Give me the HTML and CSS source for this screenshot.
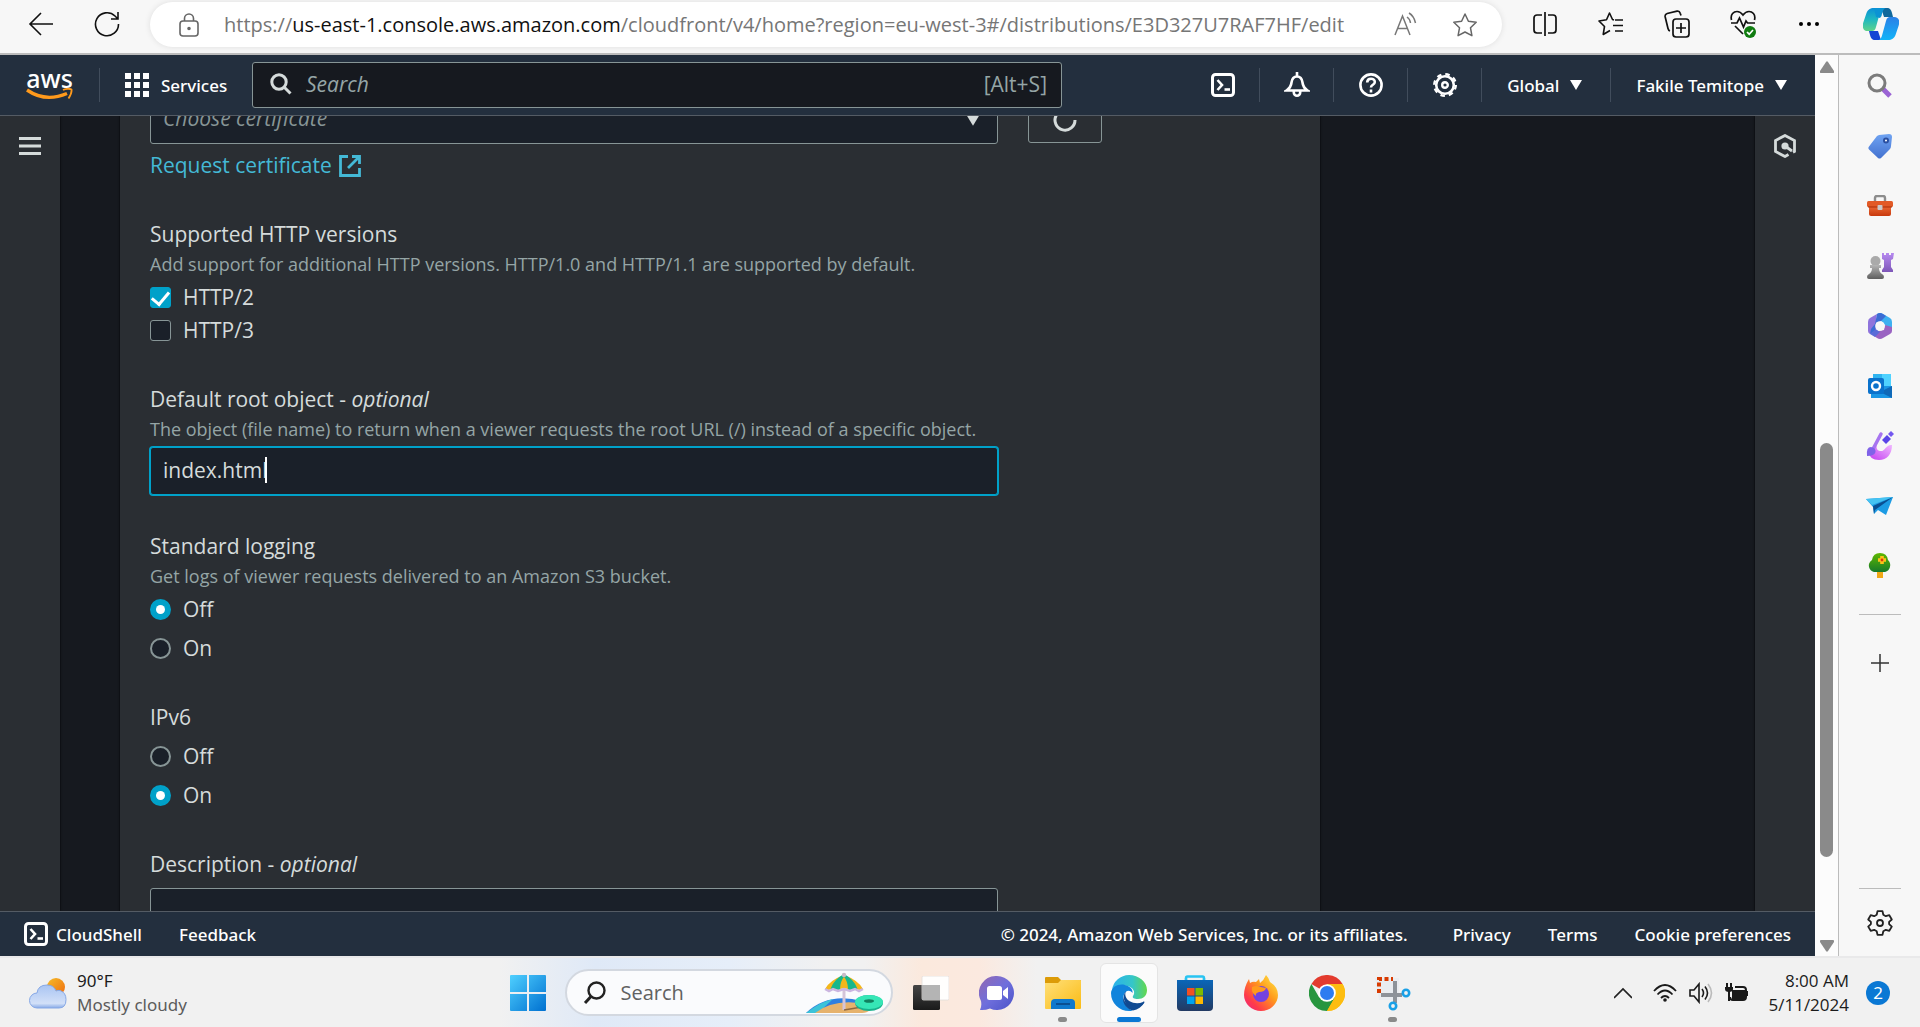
FILE: index.html
```html
<!DOCTYPE html>
<html lang="en">
<head>
<meta charset="utf-8">
<title>CloudFront distribution settings</title>
<link rel="stylesheet" href="styles.css">
</head>
<body>
<svg class="defs" width="0" height="0" aria-hidden="true">
  <defs>
    <linearGradient id="gWin" x1="0" y1="0" x2="1" y2="1"><stop offset="0" stop-color="#4fd0ff"/><stop offset="1" stop-color="#0070d0"/></linearGradient>
    <linearGradient id="gCopA" x1="0" y1="0" x2="0" y2="1"><stop offset="0" stop-color="#0b8fd8"/><stop offset=".5" stop-color="#1fb8c0"/><stop offset="1" stop-color="#5fd38a"/></linearGradient>
    <linearGradient id="gCopB" x1="0" y1="1" x2="0" y2="0"><stop offset="0" stop-color="#2a7fe6"/><stop offset="1" stop-color="#12b4f8"/></linearGradient>
    <linearGradient id="gTag" x1="0" y1="0" x2="0" y2="1"><stop offset="0" stop-color="#6fa3f2"/><stop offset="1" stop-color="#4472d0"/></linearGradient>
    <linearGradient id="gBox" x1="0" y1="0" x2="0" y2="1"><stop offset="0" stop-color="#ec6b35"/><stop offset="1" stop-color="#c8390e"/></linearGradient>
    <linearGradient id="gGrey" x1="0" y1="0" x2="0" y2="1"><stop offset="0" stop-color="#b5b5b5"/><stop offset="1" stop-color="#5f5f5f"/></linearGradient>
    <linearGradient id="gPurple" x1="0" y1="0" x2="0" y2="1"><stop offset="0" stop-color="#b78af0"/><stop offset="1" stop-color="#7e57b8"/></linearGradient>
    <linearGradient id="gPink" x1="0" y1="1" x2="1" y2="0"><stop offset="0" stop-color="#c23cf0"/><stop offset="1" stop-color="#f0b8ff"/></linearGradient>
    <linearGradient id="gTree" x1="0" y1="0" x2="0" y2="1"><stop offset="0" stop-color="#5fb800"/><stop offset="1" stop-color="#167a2a"/></linearGradient>
    <linearGradient id="gSun" x1="0" y1="0" x2="1" y2="1"><stop offset="0" stop-color="#f6bd28"/><stop offset="1" stop-color="#ee6a10"/></linearGradient>
    <linearGradient id="gCloud" x1="0" y1="0" x2="0" y2="1"><stop offset="0" stop-color="#a9c4f2"/><stop offset=".8" stop-color="#d2e0f8"/><stop offset="1" stop-color="#88aae6"/></linearGradient>
    <linearGradient id="gChat" x1="0" y1="0" x2="1" y2="1"><stop offset="0" stop-color="#9468b0"/><stop offset=".5" stop-color="#6f6fdc"/><stop offset="1" stop-color="#4a52c8"/></linearGradient>
    <linearGradient id="gFold" x1="0" y1="0" x2="1" y2="1"><stop offset="0" stop-color="#ffe07a"/><stop offset="1" stop-color="#fabb14"/></linearGradient>
    <linearGradient id="gEdgeTop" x1="0" y1="0" x2="1" y2="0"><stop offset="0" stop-color="#2ab0ee"/><stop offset=".6" stop-color="#35c6c8"/><stop offset="1" stop-color="#62d84c"/></linearGradient>
    <linearGradient id="gStore" x1="0" y1="0" x2="0" y2="1"><stop offset="0" stop-color="#0a66b8"/><stop offset="1" stop-color="#233a62"/></linearGradient>
    <linearGradient id="gFox" x1="1" y1="0" x2="0" y2="1"><stop offset="0" stop-color="#fff14a"/><stop offset=".4" stop-color="#ff9a1c"/><stop offset=".75" stop-color="#ff3b4a"/><stop offset="1" stop-color="#e8208a"/></linearGradient>
    <linearGradient id="gTask" x1="0" y1="0" x2="0" y2="1"><stop offset="0" stop-color="#454545"/><stop offset="1" stop-color="#1a1a1a"/></linearGradient>
    <symbol id="shell" viewBox="0 0 24 24"><rect x="1.500" y="1.500" width="21" height="21" rx="3" fill="none" stroke="#fff" stroke-width="3"/><path d="M6.500 7l4.500 5-4.500 5" fill="none" stroke="#fff" stroke-width="2.600"/><path d="M13.500 16.500h5.500" stroke="#fff" stroke-width="2.600"/></symbol>
    <symbol id="caret" viewBox="0 0 12 10"><path d="M0 0h12L6 10z" fill="currentColor"/></symbol>
  </defs>
</svg>

<header class="toolbar">
  <button class="tool" aria-label="Back"><svg width="26" height="26" viewBox="0 0 26 26" fill="none" stroke="#111" stroke-width="1.600"><path d="M25 13H2M13 2L2 13l11 11"/></svg></button>
  <button class="tool" aria-label="Refresh"><svg width="26" height="26" viewBox="0 0 26 26" fill="none" stroke="#111" stroke-width="1.600"><path d="M24.500 13A11.500 11.500 0 1 1 21 5l3 3M24 1v7h-7"/></svg></button>
  <div class="address">
    <svg width="20" height="24" viewBox="0 0 20 24" fill="none" stroke="#666" stroke-width="1.600"><rect x="1" y="8" width="18" height="15" rx="3"/><path d="M5.500 8V5.500a4.500 4.500 0 0 1 9 0V8"/><circle cx="10" cy="15.500" r="1" fill="#666"/></svg>
    <div class="url" role="textbox" contenteditable="true" spellcheck="false" aria-label="Address">https://<b>us-east-1.console.aws.amazon.com</b>/cloudfront/v4/home?region=eu-west-3#/distributions/E3D327U7RAF7HF/edit</div>
    <button class="tool narrow" aria-label="Read aloud"><svg width="26" height="26" viewBox="0 0 26 26" fill="none" stroke="#777" stroke-width="1.500"><path d="M2 23L9.500 4l7.500 19M4.500 16.500h10M14 5q3 2 3.500 6M16 1q5 3 6.500 10"/></svg></button>
    <button class="tool narrow" aria-label="Add to favorites"><svg width="26" height="26" viewBox="0 0 26 26" fill="none" stroke="#666" stroke-width="1.500" stroke-linejoin="round"><path d="M13 2l3.400 7.200 7.800 1.100-5.700 5.500 1.400 7.900L13 20l-6.900 3.700 1.400-7.900-5.700-5.500 7.800-1.100z"/></svg></button>
  </div>
  <div class="browser-tools">
    <button class="tool" aria-label="Split screen"><svg width="24" height="26" viewBox="0 0 24 26" fill="none" stroke="#111" stroke-width="1.700"><path d="M9 4H4a3 3 0 0 0-3 3v12a3 3 0 0 0 3 3h5M15 4h5a3 3 0 0 1 3 3v12a3 3 0 0 1-3 3h-5M12 1v24"/></svg></button>
    <button class="tool" aria-label="Favorites"><svg width="26" height="26" viewBox="0 0 26 26" fill="none" stroke="#111" stroke-width="1.600" stroke-linejoin="round"><path d="M16 9l-1.500-.5L11.500 2 8.500 8.800 1 10l5.500 5.500L5.200 23.500l6.800-4M17 9h8M15 14.500h10M17 20h8"/></svg></button>
    <button class="tool" aria-label="Collections"><svg width="26" height="28" viewBox="0 0 26 28" fill="none" stroke="#111" stroke-width="1.700"><rect x="9" y="9" width="16" height="18" rx="3"/><path d="M17 13v10M12 18h10M6 21q-1.500-.5-2-2.500L1.200 7q-.6-2.800 2-3.500L13 1.200q2.500-.4 3.200 2l.8 2.300"/></svg></button>
    <button class="tool" aria-label="Browser essentials"><svg width="26" height="28" viewBox="0 0 26 28" fill="none" stroke="#111" stroke-width="1.700"><path d="M1.500 10C0 4 4 1.500 7 1.500c3 0 4.500 1.500 6 3.500 1.500-2 3-3.500 6-3.500s7 2.500 5.500 8.500M1 13h6l2.500-5 4 9 2.500-6 1.500 2H25M5 16l8 8"/><circle cx="20" cy="22" r="6" fill="#107c10" stroke="none"/><path d="M17 22l2.200 2.200L23 20" stroke="#fff"/></svg></button>
    <button class="tool" aria-label="Settings and more"><svg width="22" height="6" viewBox="0 0 22 6"><circle cx="3" cy="3" r="2"/><circle cx="11" cy="3" r="2"/><circle cx="19" cy="3" r="2"/></svg></button>
  </div>
  <button class="copilot" aria-label="Copilot"><svg width="36" height="32" viewBox="0 0 36 32"><path d="M18 0h6c3 0 4 1.500 5 5l1 4h-9z" fill="#10689c"/><path d="M18 32h-6c-3 0-4-1.500-5-5l-1-4h9z" fill="#1546d4"/><path id="ribbon" d="M11 0h9c-2 1-2.600 3-3.300 5.500L13 19c-.8 3-2 4-4 4H5c-5 0-6-4-4.700-8.500L3.500 5C5 1.500 7 0 11 0z" fill="url(#gCopA)"/><path d="M11 0h12c-2.500 0-3.500 4-4.500 8l-1.500 2L13 9z" fill="#0b93d4"/><path d="M11 0h9c-2 1-2.600 3-3.300 5.500L13 19c-.8 3-2 4-4 4H5c-5 0-6-4-4.700-8.500L3.500 5C5 1.500 7 0 11 0z" fill="url(#gCopB)" transform="rotate(180 18 16)"/></svg></button>
</header>

<div class="browser">
  <div class="page">
    <header class="aws-header">
      <a class="logo" href="#" aria-label="AWS home"><span>aws</span><svg width="48" height="14" viewBox="0 0 48 14"><path d="M1 2c13 9 27 9 40 3.500" fill="none" stroke="#ff9a1c" stroke-width="3.400"/><path d="M37 2c3-1.500 7-1.500 8.500-.5.500 3-1 6-3 9" fill="none" stroke="#ff9a1c" stroke-width="1.800"/></svg></a>
      <button class="services"><svg width="24" height="24" viewBox="0 0 24 24" fill="#fff"><path d="M0 0h6v6H0zM9 0h6v6H9zM18 0h6v6h-6zM0 9h6v6H0zM9 9h6v6H9zM18 9h6v6h-6zM0 18h6v6H0zM9 18h6v6H9zM18 18h6v6h-6z"/></svg>Services</button>
      <label class="search">
        <svg width="22" height="22" viewBox="0 0 22 22" fill="none" stroke="#d5dbdb" stroke-width="3"><circle cx="9" cy="9" r="7.200"/><path d="M14 14l6.500 6.500"/></svg>
        <input type="search" placeholder="Search" aria-label="Search services">
        <span>[Alt+S]</span>
      </label>
      <nav class="aws-nav">
        <button aria-label="CloudShell"><svg width="24" height="24"><use href="#shell"/></svg></button>
        <button aria-label="Notifications"><svg width="26" height="26" viewBox="0 0 26 26" fill="none" stroke="#fff" stroke-width="2.600"><path d="M13 0v4M2.500 18.500q4.500-3 5-8 .8-6 5.500-6t5.500 6q.5 5 5 8z"/><path d="M9.800 19v1.500a3.200 3.200 0 0 0 6.400 0V19"/></svg></button>
        <button aria-label="Help"><svg width="24" height="24" viewBox="0 0 24 24" fill="none" stroke="#fff" stroke-width="2.600"><circle cx="12" cy="12" r="10.600"/><path d="M8.200 9.500c0-5 7.600-4.800 7.600-.6 0 3-3.800 2.800-3.800 5.600"/><path d="M12 16.500v3"/></svg></button>
        <button aria-label="Settings"><svg width="24" height="24" viewBox="0 0 24 24" fill="none" stroke="#fff"><circle cx="12" cy="12" r="8.800" stroke-width="2.600"/><circle cx="12" cy="12" r="10.800" stroke-width="2.400" stroke-dasharray="4.500 3.980"/><circle cx="12" cy="12" r="2.800" stroke-width="2.400"/></svg></button>
        <button class="menu">Global<svg width="12" height="10"><use href="#caret"/></svg></button>
        <button class="menu">Fakile Temitope<svg width="12" height="10"><use href="#caret"/></svg></button>
      </nav>
    </header>

    <main class="workspace">
      <aside class="strip"><button aria-label="Open navigation"><svg width="22" height="18" viewBox="0 0 22 18" fill="#d5dbdb"><path d="M0 0h22v3H0zM0 7.500h22v3H0zM0 15h22v3H0z"/></svg></button></aside>
      <form class="panel">
        <div class="group">
          <div class="cert-row">
            <div class="select-wrap"><select aria-label="Custom SSL certificate"><option>Choose certificate</option></select><svg width="14" height="12"><use href="#caret"/></svg></div>
            <button type="button" class="reload" aria-label="Refresh certificates"><svg width="24" height="24" viewBox="0 0 24 24" fill="none" stroke="#d5dbdb" stroke-width="3"><path d="M22 12a10 10 0 1 1-3.500-7.500M21 0v6h-6"/></svg></button>
          </div>
          <a class="link" href="#">Request certificate<svg width="22" height="22" viewBox="0 0 22 22" fill="none" stroke="#44b9d6" stroke-width="2.800"><path d="M9 1.500H1.500v19h19V13M13 1.500h7.500V9M20 2L9 13"/></svg></a>
        </div>
        <fieldset class="group">
          <legend>Supported HTTP versions</legend>
          <p class="hint">Add support for additional HTTP versions. HTTP/1.0 and HTTP/1.1 are supported by default.</p>
          <div class="checks">
            <label class="choice"><input type="checkbox" checked>HTTP/2</label>
            <label class="choice"><input type="checkbox">HTTP/3</label>
          </div>
        </fieldset>
        <div class="group">
          <label class="title" for="root">Default root object - <i>optional</i></label>
          <p class="hint">The object (file name) to return when a viewer requests the root URL (/) instead of a specific object.</p>
          <div class="box focused"><input id="root" class="fit" type="text" value="index.html" spellcheck="false"><span class="cursor"></span></div>
        </div>
        <fieldset class="group">
          <legend>Standard logging</legend>
          <p class="hint">Get logs of viewer requests delivered to an Amazon S3 bucket.</p>
          <div class="radios">
            <label class="choice"><input type="radio" name="logging" checked>Off</label>
            <label class="choice"><input type="radio" name="logging">On</label>
          </div>
        </fieldset>
        <fieldset class="group">
          <legend>IPv6</legend>
          <div class="radios">
            <label class="choice"><input type="radio" name="ipv6">Off</label>
            <label class="choice"><input type="radio" name="ipv6" checked>On</label>
          </div>
        </fieldset>
        <div class="group">
          <label class="title" for="desc">Description - <i>optional</i></label>
          <div class="box"><input id="desc" type="text"></div>
        </div>
      </form>
      <aside class="strip right"><button aria-label="Open assistant"><svg width="24" height="24" viewBox="0 0 24 24" fill="none" stroke="#d5dbdb" stroke-width="2.800"><path d="M15.500 20.500l-3.500 2L2.500 17.500v-11L12 1.500l9.500 5v11l-1.500.8"/><circle cx="12" cy="12" r="3.600" fill="#d5dbdb" stroke="none"/><path d="M12 12l7 5"/></svg></button></aside>
    </main>

    <footer class="aws-footer">
      <button><svg width="24" height="24"><use href="#shell"/></svg>CloudShell</button>
      <button class="feedback">Feedback</button>
      <span class="copyright">© 2024, Amazon Web Services, Inc. or its affiliates.</span>
      <a href="#">Privacy</a>
      <a href="#">Terms</a>
      <a href="#">Cookie preferences</a>
    </footer>
  </div>

  <div class="scrollbar">
    <svg width="14" height="12" viewBox="0 0 14 12"><path d="M6 1q1-1.500 2 0l6 9q.5 2-1 2H1q-1.500 0-1-2z" fill="#8a8a8a"/></svg>
    <div class="track"><div class="thumb"></div></div>
    <svg width="14" height="12" viewBox="0 0 14 12"><path d="M6 11q1 1.500 2 0l6-9q.5-2-1-2H1Q-.5 0 0 2z" fill="#8a8a8a"/></svg>
  </div>

  <aside class="sidebar">
    <button aria-label="Search"><svg width="26" height="26" viewBox="0 0 26 26" fill="none"><path d="M16 16l7 7" stroke="#9a63d4" stroke-width="5"/><circle cx="10" cy="10" r="8" stroke="#7b7b7b" stroke-width="3"/></svg></button>
    <button aria-label="Shopping"><svg width="26" height="26" viewBox="0 0 26 26"><path d="M12 2l10-1q3 0 3 3l-1 9q0 2-1.500 3.500L14 25q-1.500 1-3 0L2 16.500q-1.500-1.500 0-3L10 3z" fill="url(#gTag)"/><circle cx="19" cy="7.500" r="2" fill="#fff" stroke="#2b4fa0" stroke-width="2"/></svg></button>
    <button aria-label="Tools"><svg width="28" height="22" viewBox="0 0 28 22"><path d="M9 6V3q0-2 2-2h6q2 0 2 2v3" fill="none" stroke="#8c8c8c" stroke-width="2.400"/><path d="M3 11h22v8q0 2-2 2H5q-2 0-2-2z" fill="url(#gBox)"/><rect x="1" y="6" width="26" height="6" rx="1.500" fill="#e25a26"/><path d="M2 12h24" stroke="#a82c08" stroke-width="1"/><rect x="11.500" y="10" width="5" height="5" rx="1" fill="#c9c9c9"/></svg></button>
    <button aria-label="Games"><svg width="28" height="28" viewBox="0 0 28 28"><path d="M16 1h2v2h2V1h3v2h2V1h3l-1 6-2 1v7l2 3v2H16v-2l2-3V8l-2-1z" fill="url(#gPurple)"/><circle cx="9.500" cy="9" r="5" fill="#aaa"/><path d="M4 13h11v3h-2q0 4 3 6 2 1 2 3t-2 2H3q-2 0-2-2t2-3q3-2 3-6H4z" fill="url(#gGrey)"/></svg></button>
    <button aria-label="Microsoft 365"><svg width="26" height="28" viewBox="0 0 26 28"><path d="M10 2q3-2 6 0l7 4q2 1 2 4v8l-7-5-4-4-4 2z" fill="#3eb0f0"/><path d="M10 2L3 6Q1 7 1 10v9q0 2 2 3l6-3V8z" fill="#8f74dc"/><path d="M10 2q3-2 6 0l3 2-5 5-5 2-1 8-5 3 1-5 4-5z" fill="#3c6cd4"/><path d="M25 15v4q0 2-2 3l-7 4q-3 2-6 0l-3-2 5-5 5-1 1-5z" fill="#9a63c2"/><path d="M9 17l4 3-5 5-5-3z" fill="#5a6cd8"/><circle cx="13" cy="14" r="4.800" fill="#f7f7f7"/></svg></button>
    <button aria-label="Outlook"><svg width="26" height="26" viewBox="0 0 26 26"><path d="M6 1h18v12H6z" fill="#30b4f0"/><path d="M15 1h9v12h-9z" fill="#4fd2ff"/><path d="M4 13h21v12H4z" fill="#1a96e4"/><path d="M25 13v12l-12-6z" fill="#0f69b8"/><rect x="1" y="5" width="16" height="16" rx="2" fill="#0a72cc"/><circle cx="9" cy="13" r="4" fill="none" stroke="#fff" stroke-width="2.400"/></svg></button>
    <button aria-label="Designer"><svg width="28" height="30" viewBox="0 0 28 30"><path d="M3 21c0 5 4 8 10 8 8 0 13-6 13-15-6-1-7 7-12 6-3-.5-4-3-3-6z" fill="url(#gPink)"/><path d="M15 3L7 18" stroke="#a774f0" stroke-width="3.500" stroke-linecap="round"/><path d="M1 25q-1-9 4-9 5 1 4.500 5-1 4-8.500 4z" fill="#7f62e8"/><path d="M21 4l4 4-5 5-4-4z" fill="#5a45e8"/><path d="M25 0l3 3-3 3-3-3z" fill="#7356f0"/></svg></button>
    <button aria-label="Drop"><svg width="27" height="20" viewBox="0 0 27 20"><path d="M0 3L27 1l-7 18-8-5-4 4-1-7z" fill="#1c9be4"/><path d="M7 10L27 1 9 14l-1 4z" fill="#0a4f92"/><path d="M0 3l27-2L6 9z" fill="#45c3f2"/></svg></button>
    <button aria-label="Tree"><svg width="24" height="28" viewBox="0 0 24 28"><path d="M9 19h6v7H9z" fill="#f0a818"/><path d="M12 1q7 0 8 7 3 3 2 7t-5 5H6q-4-1-5-5t3-7Q5 1 12 1z" fill="url(#gTree)"/><path d="M14 4v8M10 8h8" stroke="#ffc21a" stroke-width="3.600"/><circle cx="14" cy="8" r="1.400" fill="#d63a10"/></svg></button>
    <hr>
    <button class="add" aria-label="Customize"><svg width="18" height="18" viewBox="0 0 18 18" stroke="#333" stroke-width="1.500"><path d="M9 0v18M0 9h18"/></svg></button>
    <hr class="low">
    <button aria-label="Sidebar settings"><svg width="26" height="26" viewBox="0 0 26 26" fill="none" stroke="#222" stroke-width="1.800" stroke-linejoin="round"><path d="M10.500 1.200h5l.8 3.600 2.500 1.400 3.500-1 2.500 4.300-2.700 2.400v2.200l2.700 2.500-2.500 4.200-3.500-1-2.500 1.400-.8 3.600h-5l-.8-3.600-2.500-1.400-3.500 1-2.500-4.200 2.700-2.500v-2.200L1.200 9.500l2.500-4.300 3.500 1 2.500-1.400z"/><circle cx="13" cy="13" r="3"/></svg></button>
  </aside>
</div>

<footer class="taskbar">
  <button class="weather">
    <svg width="38" height="32" viewBox="0 0 38 32"><circle cx="27" cy="10" r="9" fill="url(#gSun)"/><path d="M8 31a7.500 7.500 0 0 1 0-15q1-8 10-8 7 0 9 6 2-1 4-.5 6 2 6 9 0 8.500-7 8.500z" fill="url(#gCloud)" stroke="#86a8e6" stroke-width="1"/></svg>
    <span>90°F<small>Mostly cloudy</small></span>
  </button>
  <div class="apps">
    <button class="app" aria-label="Start"><svg width="36" height="36" viewBox="0 0 36 36" fill="url(#gWin)"><path d="M0 1q0-1 1-1h16v17H0zM19 0h16q1 0 1 1v16H19zM0 19h17v17H1q-1 0-1-1zM19 19h17v16q0 1-1 1H19z"/></svg></button>
    <label class="task-search">
      <svg width="24" height="24" viewBox="0 0 24 24" fill="none" stroke="#222" stroke-width="2.400"><circle cx="13.500" cy="9.500" r="8"/><path d="M8 15.500L2 22" stroke-width="3"/></svg>
      <input type="search" placeholder="Search" aria-label="Search Windows">
      <svg width="78" height="42" viewBox="0 0 78 42"><path d="M0 41Q22 20 56 29v12z" fill="#2f7fe0"/><path d="M0 41Q16 29 27 27L12 41z" fill="#3cc3d8"/><path d="M9 41Q30 25 64 33v5q-3 3-8 3z" fill="#e6b26c"/><path d="M38 10v28" stroke="#d4c4d8" stroke-width="3"/><path d="M38 38l18-3" stroke="#8d6840" stroke-width="1.500"/><path d="M19 17Q24 8 38 3q14 5 19 14l-4 1-4-2-4 2-7-2-7 2-4-2-4 2z" fill="#f4b71a"/><path d="M26 16q3-8 12-13-5 6-5 14zM50 16q-3-8-12-13 5 6 5 14z" fill="#18b78c" stroke="#18b78c" stroke-width="2"/><path d="M19 17l4 2 4-2 5 2 6-2 6 2 5-2 4 2 4-2" fill="none" stroke="#cbb6e0" stroke-width="2.500"/><circle cx="38" cy="3" r="2.200" fill="#c9bcc8"/><ellipse cx="63" cy="31" rx="14" ry="8" fill="#19b18c"/><ellipse cx="63" cy="30" rx="14" ry="7" fill="#36e6b6"/><ellipse cx="63" cy="29" rx="5" ry="1.800" fill="#11805f"/></svg>
    </label>
    <button class="app first" aria-label="Task view"><svg width="36" height="34" viewBox="0 0 36 34"><rect x="0" y="9" width="27" height="25" rx="1.500" fill="url(#gTask)"/><rect x="9" y="0" width="27" height="24" rx="1.500" fill="#fff" fill-opacity=".92" stroke="#e2dedb" stroke-width=".8"/><path d="M9 9h18v15H9z" fill="#b4b4b4"/></svg></button>
    <button class="app" aria-label="Chat"><svg width="36" height="36" viewBox="0 0 36 36"><path d="M18 1a17 17 0 1 1-7 32.500q-5 2-10 1.500 2-4 1-9A17 17 0 0 1 18 1z" fill="url(#gChat)"/><rect x="8" y="11" width="15" height="14" rx="2.500" fill="#fff"/><path d="M24 16l5-4v12l-5-4z" fill="#fff"/></svg></button>
    <button class="app" aria-label="File Explorer"><svg width="36" height="34" viewBox="0 0 36 34"><path d="M0 2q0-1 1-1h12l3 3h19q1 0 1 1v6H0z" fill="#dc9b08"/><path d="M0 7h13l3-3h19q1 0 1 1v27q0 1-1 1H1q-1 0-1-1z" fill="url(#gFold)"/><path d="M6 33v-6q0-4 4-4h16q4 0 4 4v6z" fill="#0f78cc"/><path d="M11 28h14" stroke="#0a4f92" stroke-width="2"/></svg><i class="dot"></i></button>
    <button class="app active" aria-label="Microsoft Edge"><svg width="36" height="36" viewBox="0 0 36 36"><path d="M1 15A17.500 17.500 0 0 1 18 0c10 0 18 7 18 15 0 6-4 9-9 9-4 0-6-1-5-3 3-4 0-9-6-10C9 9.500 3 12 0 19z" fill="url(#gEdgeTop)"/><path d="M0 18C1 11 8 8.500 14 10c6 1.500 8 5 7.500 8-3-4-8-2-9 3-1 6 3 12 9 14.500Q20 36 18 36A18 18 0 0 1 0 18z" fill="#1184dc"/><path d="M15 16c-5 6-1 14 5 16 5 2 10 0 13-4 1-1 0-2-1-1-7 3-16 0-17.500-6-.5-2 0-4 .5-5z" fill="#104a92"/><path d="M12 22c-1 7 5 13 10 13.500 5-1 9-4 11.500-8-10 6-20 3-21.500-5.500z" fill="#104a92"/></svg><i class="dot wide"></i></button>
    <button class="app" aria-label="Microsoft Store"><svg width="36" height="36" viewBox="0 0 36 36"><path d="M9 8V3q0-1.500 1.500-1.500h15Q27 1.500 27 3v5" fill="none" stroke="#28c4f2" stroke-width="2.400"/><path d="M0 5h36v27q0 4-4 4H4q-4 0-4-4z" fill="url(#gStore)"/><path d="M9 5V3M27 5V3" stroke="#28c4f2" stroke-width="2.400"/><path d="M10 13h7.500v7.500H10z" fill="#f25022"/><path d="M18.500 13H26v7.500h-7.500z" fill="#7fba00"/><path d="M10 21.500h7.500V29H10z" fill="#00a4ef"/><path d="M18.500 21.500H26V29h-7.500z" fill="#ffb900"/></svg></button>
    <button class="app" aria-label="Firefox"><svg width="34" height="36" viewBox="0 0 34 36"><path d="M22 0q3 3 4 7 8 5 8 13A17 16 0 0 1 0 20Q0 12 5 4l1 4q3-2 6-1l3-3 1 4q4-3 6-8z" fill="url(#gFox)"/><circle cx="17" cy="19" r="8" fill="#7542e0"/><path d="M8 12q5-2 9 0l5 1q-1 4-7 4-4 1-3 4-5-3-4-9z" fill="#ff9a1c"/></svg></button>
    <button class="app" aria-label="Chrome"><svg width="36" height="36" viewBox="0 0 36 36"><path d="M18 18L2.400 9A18 18 0 0 1 33.600 9z" fill="#e33b2e"/><path d="M18 18V9h15.600A18 18 0 0 1 18 36z" fill="#fdbd10"/><path d="M10.200 22.500L2.400 9A18 18 0 0 0 18 36l7.800-13.500z" fill="#28963f"/><path d="M18 9h15.600L18 9zM25.800 22.500L18 36A18 18 0 0 0 33.600 9H18z" fill="#fdbd10"/><circle cx="18" cy="18" r="8.800" fill="#fff"/><circle cx="18" cy="18" r="7" fill="#2d7cf0"/></svg></button>
    <button class="app" aria-label="Snipping Tool"><svg width="36" height="36" viewBox="0 0 36 36" fill="none"><path d="M0 3h24v22H4z" fill="#e9ecf0"/><path d="M4 18V4h14" stroke="#d83b01" stroke-width="4" stroke-dasharray="4 2.500"/><path d="M20 6v22M6 20h21" stroke="#8d9299" stroke-width="4"/><circle cx="31" cy="18" r="3.200" stroke="#1aa0e6" stroke-width="2.600"/><circle cx="18" cy="31" r="3.200" stroke="#1aa0e6" stroke-width="2.600"/></svg><i class="dot"></i></button>
  </div>
  <div class="tray">
    <button aria-label="Show hidden icons"><svg width="18" height="12" viewBox="0 0 18 12" fill="none" stroke="#222" stroke-width="1.700"><path d="M0 11l9-9 9 9"/></svg></button>
    <button aria-label="Network"><svg width="24" height="20" viewBox="0 0 24 20" fill="none" stroke="#1a1a1a" stroke-width="1.800"><path d="M1 8q11-12 22 0M4.500 11.500q7.500-8 15 0M8 15q4-4 8 0"/><circle cx="12" cy="17" r="1.800" fill="#1a1a1a" stroke="none"/></svg></button>
    <button aria-label="Volume"><svg width="24" height="22" viewBox="0 0 24 22" fill="none" stroke="#1a1a1a" stroke-width="1.600"><path d="M1 8h4l5-6v18l-5-6H1zM13 7q3 4 0 8M16 4.500q5 6.500 0 13"/><path d="M19 2q7 9 0 18" stroke="#bbb"/></svg></button>
    <button aria-label="Battery"><svg width="24" height="20" viewBox="0 0 24 20" fill="none" stroke="#1a1a1a" stroke-width="2"><path d="M10 4h8q3 0 3 3v7q0 3-3 3H8q-3 0-3-3"/><path d="M8 8h11v7H8z" fill="#1a1a1a"/><path d="M22 8v5M2 0v4M6 0v4M4 8v10"/><path d="M0 4h8v2q0 3-4 3T0 6z" fill="#1a1a1a" stroke="none"/></svg></button>
    <button class="clock"><span>8:00 AM</span><span>5/11/2024</span></button>
    <button class="badge" aria-label="2 notifications">2</button>
  </div>
</footer>
</body>
</html>
```
FILE: styles.css
```css
* { box-sizing: border-box; }

body {
  margin: 0;
  height: 100vh;
  display: flex;
  flex-direction: column;
  overflow: hidden;
  background: #f7f7f7;
  color: #d5dbdb;
  font: 20px/33px "Noto Sans", "Open Sans", sans-serif;
}

button, input, select {
  margin: 0;
  padding: 0;
  border: 0;
  background: none;
  color: inherit;
  font: inherit;
  outline: 0;
}

a { color: inherit; text-decoration: none; }
svg { display: block; flex: none; }
.defs { position: absolute; }

/* Browser toolbar */
.toolbar {
  display: flex;
  align-items: center;
  flex: none;
  height: 55px;
  padding: 0 0 6px 8px;
  border-bottom: 2px solid #bcbcbc;
}

.tool {
  display: flex;
  align-items: center;
  justify-content: center;
  width: 66px;
  height: 44px;
}

.tool.narrow { width: 59px; }

.address {
  flex: 1;
  display: flex;
  align-items: center;
  min-width: 0;
  height: 45px;
  margin: 2px 10px 0;
  padding: 0 8px 0 29px;
  border-radius: 23px;
  background: #fff;
  box-shadow: 0 0 6px rgba(0, 0, 0, .1);
}

.url {
  flex: 1;
  margin-left: 25px;
  overflow: hidden;
  white-space: nowrap;
  color: #767676;
  font-family: "Open Sans", sans-serif;
}

.url b { font-weight: 400; color: #111; }

.browser-tools { display: flex; }

.copilot {
  display: flex;
  justify-content: center;
  width: 78px;
}

/* Browser window body */
.browser {
  flex: 1;
  display: flex;
  min-height: 0;
}

.page {
  flex: 1;
  display: flex;
  flex-direction: column;
  min-width: 0;
  background: #16191f;
}

.aws-header {
  flex: none;
  display: flex;
  align-items: center;
  height: 61px;
  border-bottom: 1px solid #545b64;
  background: #232f3e;
  color: #fff;
  font-size: 17px;
  font-weight: 500;
}

.logo {
  display: flex;
  flex-direction: column;
  align-items: center;
  width: 100px;
  border-right: 1px solid #414d5c;
  font-size: 25px;
  font-weight: 500;
  line-height: 20px;
}

.services {
  display: flex;
  align-items: center;
  gap: 12px;
  width: 152px;
  padding-left: 25px;
}

.search {
  flex: 0 1 810px;
  display: flex;
  align-items: center;
  gap: 14px;
  height: 46px;
  padding: 0 14px 2px 17px;
  border: 1px solid #879596;
  border-radius: 3px;
  background: #16191f;
  color: #95a5a6;
  font-family: "Open Sans", sans-serif;
  font-size: 21px;
  font-weight: 400;
}

.search input { flex: 1; min-width: 0; }
.search input::placeholder { color: #95a5a6; font-style: italic; opacity: 1; }

.aws-nav {
  display: flex;
  margin-left: auto;
}

.aws-nav button {
  display: flex;
  align-items: center;
  justify-content: center;
  gap: 11px;
  width: 74px;
  height: 34px;
  border-right: 1px solid #414d5c;
}

.aws-nav .menu { width: auto; padding: 0 28px 0 25px; }
.aws-nav .menu:last-child { border-right: 0; }

.workspace {
  flex: 1;
  display: flex;
  min-height: 0;
  overflow: hidden;
}

.strip {
  flex: none;
  width: 60px;
  padding: 21px 19px;
  background: #2a2e33;
  box-shadow: 0 0 2px #000;
}

.strip button { display: block; }
.strip.right { margin-left: auto; padding: 18px; }

/* The form is scrolled part of the way down */
.panel {
  flex: 0 1 1200px;
  align-self: flex-start;
  display: flex;
  flex-direction: column;
  gap: 36px;
  margin: -20px 0 0 60px;
  padding: 0 30px 30px;
  background: #2a2e33;
  box-shadow: 0 0 2px #000;
  font-family: "Open Sans", sans-serif;
  font-size: 21px;
}

.group {
  display: flex;
  flex-direction: column;
  align-items: flex-start;
  min-width: 0;
  margin: 0;
  padding: 0;
  border: 0;
}

.cert-row {
  display: flex;
  align-items: flex-start;
  gap: 30px;
  margin-bottom: 6px;
}

.select-wrap {
  display: grid;
  align-items: center;
  width: 848px;
}

.select-wrap > * { grid-area: 1 / 1; }
.select-wrap svg { justify-self: end; margin-right: 18px; }

select {
  appearance: none;
  width: 100%;
  height: 48px;
  padding: 0 12px 3px;
  border: 1px solid #879596;
  border-radius: 3px;
  background: #1a2029;
  color: #879596;
  font-style: italic;
}

.reload {
  display: flex;
  align-items: center;
  justify-content: center;
  width: 74px;
  height: 47px;
  border: 1px solid #879596;
  border-radius: 3px;
}

.link {
  display: flex;
  align-items: center;
  gap: 7px;
  color: #44b9d6;
}

legend, .title, .link, .choice {
  padding: 0 0 2px;
  line-height: 31px;
}

.hint {
  margin: 0;
  color: #95a5a6;
  font-size: 18px;
  line-height: 24px;
}

.checks, .radios { margin-top: 6px; }

.radios {
  display: grid;
  gap: 6px;
}

.choice {
  display: flex;
  align-items: center;
  gap: 12px;
}

.choice input {
  appearance: none;
  display: grid;
  place-items: center;
  width: 21px;
  height: 21px;
  border: 1px solid #879596;
  border-radius: 3px;
  background: #1a2029;
}

.choice input[type="radio"] { border: 2px solid #879596; border-radius: 50%; }

.choice input:checked,
.choice input[type="radio"]:checked {
  border-color: #00a1c9;
  background: #00a1c9;
}

.choice input[type="radio"]:checked::after {
  content: "";
  width: 9px;
  height: 9px;
  border-radius: 50%;
  background: #fff;
}

.choice input[type="checkbox"]:checked::after {
  content: "";
  width: 8px;
  height: 14px;
  margin-bottom: 4px;
  border: solid #fff;
  border-width: 0 3px 3px 0;
  rotate: 40deg;
}

.box {
  display: flex;
  align-items: center;
  width: 848px;
  height: 48px;
  margin-top: 6px;
  padding: 0 12px 2px;
  border: 1px solid #879596;
  border-radius: 3px;
  background: #1a2029;
}

.box.focused {
  border-color: #00a1c9;
  box-shadow: 0 0 0 1px #00a1c9;
}

.box input { width: 100%; }
.box .fit { width: auto; field-sizing: content; }
.cursor { width: 2px; height: 26px; margin-left: -2px; background: #fff; }

.aws-footer {
  flex: none;
  display: flex;
  align-items: center;
  gap: 37px;
  height: 45px;
  padding: 0 24px;
  border-top: 1px solid #545b64;
  background: #232f3e;
  color: #fff;
  font-size: 17px;
  font-weight: 500;
}

.aws-footer button {
  display: flex;
  align-items: center;
  gap: 8px;
}

.copyright { margin: 0 8px 0 auto; }

.scrollbar {
  flex: none;
  display: flex;
  flex-direction: column;
  align-items: center;
  width: 24px;
  padding: 6px 0 4px;
  border-right: 1px solid #bcbcbc;
  background: #fcfcfc;
}

.track { flex: 1; padding-top: 4px; }

.track .thumb {
  width: 13px;
  height: 48%;
  margin-top: 366px;
  border-radius: 7px;
  background: #8a8a8a;
}

.sidebar {
  flex: none;
  display: flex;
  flex-direction: column;
  align-items: center;
  width: 81px;
  padding: 1px 0 3px;
}

.sidebar button {
  display: flex;
  align-items: center;
  justify-content: center;
  width: 60px;
  height: 60px;
}

.sidebar hr {
  width: 42px;
  height: 1px;
  margin: 18px 0;
  border: 0;
  background: #bcbcbc;
}

.sidebar hr.low { margin: auto 0 4px; }

/* Taskbar */
.taskbar {
  flex: none;
  display: grid;
  grid-template-columns: 1fr auto 1fr;
  align-items: center;
  height: 71px;
  border-top: 2px solid #e9e9ea;
  background: linear-gradient(90deg, #f1f1f1 26%, #dfe9f7 31%, #e6eef9 38%, #f1f1f1 43%, #f1f1f1 45%, #fbe9dd 48%, #fbe9df 51%, #f1f1f1 54%);
  color: #1b1b1b;
  font-size: 17px;
  line-height: 24px;
}

.weather {
  display: flex;
  align-items: center;
  gap: 10px;
  padding-left: 29px;
  text-align: left;
}

.weather small {
  display: block;
  color: #5c5c5c;
  font-size: 17px;
}

.apps { display: flex; align-items: center; }

.app {
  position: relative;
  display: flex;
  align-items: center;
  justify-content: center;
  width: 58px;
  height: 60px;
  margin: 0 4px;
  border-radius: 6px;
}

.app.first { margin-left: 9px; }

.app.active {
  border: 1px solid #e4e4e4;
  background: #fbfbfb;
}

.dot {
  position: absolute;
  bottom: 1px;
  width: 9px;
  height: 5px;
  border-radius: 3px;
  background: #8a8a8a;
}

.dot.wide { bottom: 0; width: 24px; background: #0a78d4; }

.task-search {
  display: flex;
  align-items: center;
  gap: 14px;
  width: 328px;
  height: 47px;
  margin-left: 4px;
  padding: 0 7px 0 16px;
  border: 2px solid #d3d8e0;
  border-radius: 24px;
  background: #fafbfd;
  font-family: "Open Sans", sans-serif;
  font-size: 20px;
}

.task-search input { flex: 1; min-width: 0; }
.task-search input::placeholder { color: #616161; opacity: 1; }

.tray {
  display: flex;
  align-items: center;
  justify-content: flex-end;
  gap: 12px;
  padding-right: 30px;
}

.tray button:first-child { margin-right: 9px; }

.clock {
  display: grid;
  width: 88px;
  justify-items: end;
  font-family: "Open Sans", sans-serif;
}

.badge {
  width: 24px;
  height: 24px;
  margin-left: 5px;
  border-radius: 50%;
  background: #0a78d4;
  color: #fff;
  font-size: 17px;
}
```
